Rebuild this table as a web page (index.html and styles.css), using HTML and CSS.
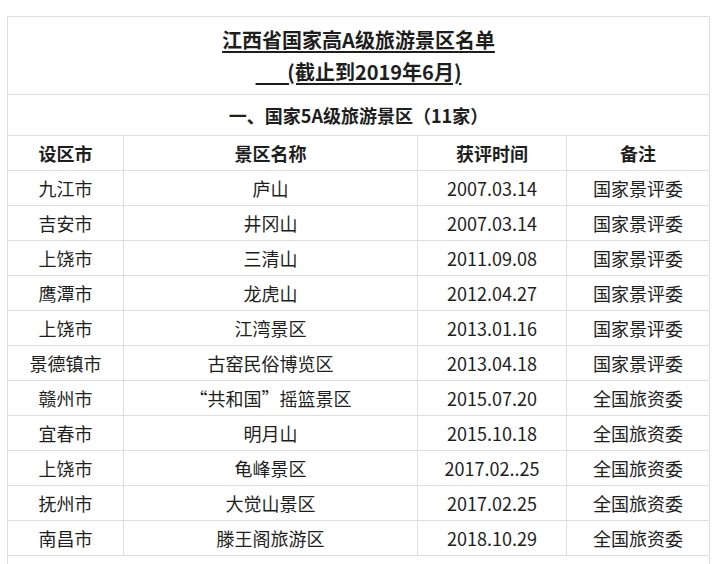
FILE: index.html
```html
<!DOCTYPE html>
<html lang="zh-CN">
<head>
<meta charset="utf-8">
<link rel="stylesheet" href="styles.css">
</head>
<body>
<table class="list">
  <colgroup>
    <col class="c1"><col class="c2"><col class="c3"><col class="c4">
  </colgroup>
  <tr class="title-row">
    <td colspan="4"><u>江西省国家高A级旅游景区名单</u><br><u>&nbsp;&nbsp;&nbsp;&nbsp;&nbsp;&nbsp;&nbsp;(截止到2019年6月)</u></td>
  </tr>
  <tr class="section-row"><td colspan="4">一、国家5A级旅游景区（11家）</td></tr>
  <tr class="head-row"><td>设区市</td><td>景区名称</td><td>获评时间</td><td>备注</td></tr>
  <tr><td>九江市</td><td>庐山</td><td>2007.03.14</td><td>国家景评委</td></tr>
  <tr><td>吉安市</td><td>井冈山</td><td>2007.03.14</td><td>国家景评委</td></tr>
  <tr><td>上饶市</td><td>三清山</td><td>2011.09.08</td><td>国家景评委</td></tr>
  <tr><td>鹰潭市</td><td>龙虎山</td><td>2012.04.27</td><td>国家景评委</td></tr>
  <tr><td>上饶市</td><td>江湾景区</td><td>2013.01.16</td><td>国家景评委</td></tr>
  <tr><td>景德镇市</td><td>古窑民俗博览区</td><td>2013.04.18</td><td>国家景评委</td></tr>
  <tr><td>赣州市</td><td>“共和国”摇篮景区</td><td>2015.07.20</td><td>全国旅资委</td></tr>
  <tr><td>宜春市</td><td>明月山</td><td>2015.10.18</td><td>全国旅资委</td></tr>
  <tr><td>上饶市</td><td>龟峰景区</td><td>2017.02..25</td><td>全国旅资委</td></tr>
  <tr><td>抚州市</td><td>大觉山景区</td><td>2017.02.25</td><td>全国旅资委</td></tr>
  <tr><td>南昌市</td><td>滕王阁旅游区</td><td>2018.10.29</td><td>全国旅资委</td></tr>
  <tr class="tail-row"><td colspan="4">&nbsp;</td></tr>
</table>
</body>
</html>
```

FILE: styles.css
```css
html, body {
  margin: 0;
  padding: 0;
  background: #ffffff;
}
body {
  padding: 16px 0 0 7px;
  font-family: "Noto Sans CJK SC", "Noto Sans", sans-serif;
  color: #1e1e1e;
}
.list {
  border-collapse: collapse;
  table-layout: fixed;
  width: 702px;
  font-size: 18px;
}
.c1 { width: 116px; }
.c2 { width: 294px; }
.c3 { width: 149px; }
.c4 { width: 143px; }
.list td {
  border: 1px solid #dedede;
  text-align: center;
  padding: 0;
  height: 34px;
  line-height: 24px;
  white-space: nowrap;
}
.title-row td {
  height: 77px;
  font-size: 20px;
  font-weight: bold;
  line-height: 32px;
}
.title-row u {
  text-decoration: underline;
  text-underline-offset: 3px;
}
.section-row td {
  height: 40px;
  font-weight: bold;
}
.head-row td {
  font-weight: bold;
}
.tail-row td {
  height: 34px;
  vertical-align: top;
}
```
